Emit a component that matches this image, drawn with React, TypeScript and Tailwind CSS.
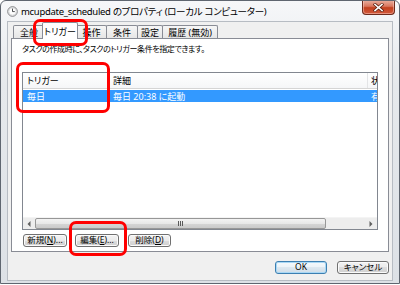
import type { ReactNode } from 'react';

const ui = "font-['Noto_Sans','Noto_Sans_CJK_JP',sans-serif] [font-feature-settings:'palt']";

function ClockIcon() {
  return (
    <svg width="11" height="11" viewBox="0 0 11 11" className="shrink-0">
      <circle cx="5.5" cy="5.5" r="4.8" fill="#f7f7f7" stroke="#7d7f82" strokeWidth="1" />
      <circle cx="5.5" cy="5.5" r="3.6" fill="#ffffff" stroke="#c9cbce" strokeWidth="0.6" />
      <path d="M5.5 2.6 V5.6 H7.8" fill="none" stroke="#3a3c40" strokeWidth="0.9" />
    </svg>
  );
}

function CloseButton() {
  return (
    <div className="ml-auto mr-[4px] -mt-px self-start w-[33px] h-[15px] rounded-b-[4px] border border-t-0 border-[#6d2a1c] bg-[linear-gradient(#eab2a3_0%,#d9765e_45%,#c2401f_55%,#d2593b_100%)] shadow-[inset_0_0_0_1px_rgba(255,220,210,0.45)] flex items-center justify-center">
      <svg width="11" height="9" viewBox="0 0 11 9">
        <path d="M2 1.5 L9 7.5 M9 1.5 L2 7.5" stroke="#5a2012" strokeWidth="3" strokeLinecap="square" />
        <path d="M2 1.5 L9 7.5 M9 1.5 L2 7.5" stroke="#ffffff" strokeWidth="1.6" strokeLinecap="square" />
      </svg>
    </div>
  );
}

function Tab({ label, className, selected }: { label: string; className: string; selected?: boolean }) {
  if (selected) {
    return (
      <div className={`relative z-10 -mx-[2px] h-[17px] -mb-px border border-b-0 border-[#898c95] rounded-t-[2px] bg-white flex items-center justify-center text-[9px] leading-none text-black ${className}`}>
        {label}
      </div>
    );
  }
  return (
    <div className={`h-[13px] -mr-px border border-b-0 border-[#898c95] rounded-t-[2px] bg-[linear-gradient(#f6f6f6,#e6e6e6)] flex items-center justify-center text-[9px] leading-none text-black ${className}`}>
      {label}
    </div>
  );
}

function Btn({ children, className, def }: { children: ReactNode; className: string; def?: boolean }) {
  return (
    <div
      className={`h-[13px] rounded-[3px] border flex items-center justify-center text-[8.5px] leading-none text-black ${
        def
          ? 'border-[#3c7fb1] bg-[linear-gradient(#f4f9fc_0%,#ecf3f8_50%,#dde8f0_50%,#d0dde8_100%)] shadow-[inset_0_0_0_1px_#a9d8f5]'
          : 'border-[#707070] bg-[linear-gradient(#f2f2f2_0%,#ebebeb_50%,#dddddd_50%,#cfcfcf_100%)] shadow-[inset_0_0_0_1px_#fbfbfb]'
      } ${className}`}
    >
      {children}
    </div>
  );
}

function ScrollBar() {
  return (
    <div className="h-[12px] flex bg-[#ededed] border-t border-[#f4f4f4]">
      <div className="w-[12px] flex items-center justify-center">
        <svg width="4" height="6" viewBox="0 0 4 6"><path d="M3.5 0 L0.5 3 L3.5 6 Z" fill="#606060" /></svg>
      </div>
      <div className="w-[291px] h-[11px] rounded-[2px] border border-[#979797] bg-[linear-gradient(#f3f3f3,#e8e8e8_50%,#d6d6d6_50%,#cacaca)] flex items-center justify-center">
        <div className="flex gap-[1px]">
          <div className="w-px h-[5px] bg-[#5a5a5a]" />
          <div className="w-px h-[5px] bg-[#5a5a5a]" />
          <div className="w-px h-[5px] bg-[#5a5a5a]" />
        </div>
      </div>
      <div className="flex-1" />
      <div className="w-[12px] flex items-center justify-center">
        <svg width="4" height="6" viewBox="0 0 4 6"><path d="M0.5 0 L3.5 3 L0.5 6 Z" fill="#606060" /></svg>
      </div>
    </div>
  );
}

function ListView() {
  return (
    <div className="ml-[10px] mt-[18px] w-[356px] h-[158px] border border-[#828790] bg-white flex flex-col overflow-hidden">
      <div className="h-[16px] flex bg-[linear-gradient(#ffffff,#f5f6f8)] border-b border-[#d5d5d5] text-[9px] leading-none text-black">
        <div className="w-[87px] border-r border-[#e3e4e6] flex items-center pl-[4px]">トリガー</div>
        <div className="w-[258px] border-r border-[#e3e4e6] flex items-center pl-[3px]">詳細</div>
        <div className="flex-1 flex items-center pl-[3px] overflow-hidden whitespace-nowrap">状</div>
      </div>
      <div className="mt-px h-[12px] flex bg-[#3399ff] text-white text-[9px] leading-none">
        <div className="w-[87px] flex items-center pl-[4px]">毎日</div>
        <div className="w-[258px] flex items-center pl-[3px]">毎日 20:38 に起動</div>
        <div className="flex-1 flex items-center pl-[3px] overflow-hidden whitespace-nowrap">有</div>
      </div>
      <div className="flex-1" />
      <ScrollBar />
    </div>
  );
}

function Mark({ className }: { className: string }) {
  return <div className={`absolute border-[3px] border-[#ff0000] rounded-[7px] pointer-events-none ${className}`} />;
}

export default function App() {
  return (
    <div className={`relative w-[400px] h-[285px] bg-white ${ui}`}>
      <div className="w-[400px] h-[284px] border border-[#5f6670] rounded-t-[6px] bg-[linear-gradient(#f6f7f9,#e6e9ec_30%,#dde1e6)] flex flex-col overflow-hidden">
        <div className="h-[21px] flex items-center pl-[6px] gap-[3px]">
          <ClockIcon />
          <span className="text-[9.5px] tracking-[-0.3px] leading-none text-black whitespace-nowrap">mcupdate_scheduled のプロパティ (ローカル コンピューター)</span>
          <CloseButton />
        </div>

        <div className="ml-[7px] mr-[7px] h-[258px] bg-[#f0f0f0] shadow-[0_0_0_1px_#b7bcc3] flex flex-col">
          <div className="h-[16px] pl-[5px] flex items-end">
            <Tab label="全般" className="w-[32px]" />
            <Tab label="トリガー" className="w-[36px]" selected />
            <Tab label="操作" className="w-[31px]" />
            <Tab label="条件" className="w-[32px]" />
            <Tab label="設定" className="w-[26px]" />
            <Tab label="履歴 (無効)" className="w-[56px]" />
          </div>

          <div className="mx-[3px] h-[214px] border border-[#898c95] bg-white flex flex-col">
            <div className="pl-[10px] pt-[4px] h-[15px] text-[8px] tracking-[-0.4px] leading-[11px] text-black whitespace-nowrap">
              タスクの作成時に、タスクのトリガー条件を指定できます。
            </div>
            <ListView />
            <div className="mt-[4px] pl-[11px] flex gap-[8px]">
              <Btn className="w-[44px]">新規(<span className="underline">N</span>)...</Btn>
              <Btn className="w-[44px]">編集(<span className="underline">E</span>)...</Btn>
              <Btn className="w-[43px] ml-px">削除(<span className="underline">D</span>)</Btn>
            </div>
          </div>

          <div className="mt-[9px] pr-[3px] flex justify-end gap-[10px]">
            <Btn className="w-[52px]" def>OK</Btn>
            <Btn className="w-[52px]">キャンセル</Btn>
          </div>
        </div>
      </div>

      <Mark className="left-[33px] top-[19px] w-[55px] h-[27px]" />
      <Mark className="left-[16px] top-[62px] w-[94px] h-[51px]" />
      <Mark className="left-[69px] top-[221px] w-[58px] h-[35px]" />
    </div>
  );
}
